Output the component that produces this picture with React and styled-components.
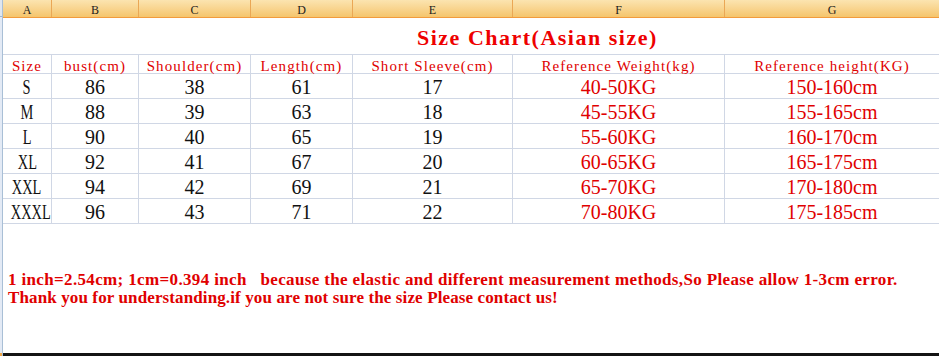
import React from "react";
import styled, { createGlobalStyle } from "styled-components";

const GlobalStyle = createGlobalStyle`
  html, body { margin: 0; padding: 0; background: #ffffff; }
  body { font-family: "Liberation Serif", serif; }
  * { box-sizing: border-box; }
`;

const COLS = "49px 87px 112px 102px 160px 212px 1fr";
const GRID = "#d0d7e5";
const RED = "#e00000";

const Page = styled.div`
  display: flex;
  width: 939px;
  height: 356px;
  overflow: hidden;
`;

const RowHeaderStrip = styled.div`
  width: 3px;
  flex: none;
  display: flex;
  flex-direction: column;
  background: #e3eaf5;
  border-right: 1px solid #a9bfd6;
`;

const StripCorner = styled.div`
  height: 17px;
  background: #dfe6ef;
  border-bottom: 1px solid #9eb6ce;
`;

const StripFill = styled.div`
  flex: 1;
`;

const StripFoot = styled.div`
  height: 3px;
  background: #f0a848;
`;

const Sheet = styled.div`
  flex: 1;
  display: flex;
  flex-direction: column;
  min-width: 0;
`;

const ColumnHeaderRow = styled.div`
  display: grid;
  grid-template-columns: ${COLS};
  grid-auto-rows: 17px;
  background: linear-gradient(#fbe4b0, #f8d38c 55%, #f5c56c);
  border-bottom: 1px solid #f29b3c;
`;

const ColumnHeaderCell = styled.div`
  border-right: ${(p) => (p.$last ? "none" : "1px solid #eaa755")};
  text-align: center;
  font-family: "Liberation Serif", serif;
  font-size: 12px;
  line-height: normal;
  padding-top: 3px;
  color: #1c1c1c;
`;

const TitleRow = styled.div`
  height: 37px;
  border-bottom: 1px solid ${GRID};
  padding: 7px 0 0 414px;
  font-family: "Liberation Serif", serif;
  font-weight: bold;
  font-size: 22px;
  letter-spacing: 1.5px;
  line-height: normal;
  color: #ee0000;
  white-space: nowrap;
`;

const TableRow = styled.div`
  display: grid;
  grid-template-columns: ${COLS};
  grid-auto-rows: ${(p) => (p.$label ? "19px" : "25px")};
`;

const Cell = styled.div`
  border-right: ${(p) => (p.$last ? "none" : `1px solid ${GRID}`)};
  border-bottom: 1px solid ${GRID};
  text-align: center;
  white-space: nowrap;
  overflow: visible;
  font-family: "Liberation Serif", serif;
  line-height: normal;
  color: ${(p) => (p.$red ? RED : "#111111")};
  font-size: ${(p) => (p.$label ? "15px" : "20px")};
  padding-top: ${(p) => (p.$label ? "3px" : "2px")};
  letter-spacing: ${(p) => (p.$label ? "1.1px" : "0px")};
`;

const SizeLabel = styled.span`
  display: inline-block;
  transform: scaleX(0.72);
  transform-origin: center;
`;

const Note = styled.div`
  flex: 1;
  padding: 47px 0 0 5px;
  font-family: "Liberation Serif", serif;
  font-weight: bold;
  font-size: 17px;
  line-height: 18px;
  color: ${RED};
`;

const NoteLine = styled.div`
  white-space: pre;
  letter-spacing: ${(p) => p.$spacing};
`;

const BottomBar = styled.div`
  height: 3px;
  background: #141414;
`;

const letters = ["A", "B", "C", "D", "E", "F", "G"];
const labels = [
  "Size",
  "bust(cm)",
  "Shoulder(cm)",
  "Length(cm)",
  "Short Sleeve(cm)",
  "Reference Weight(kg)",
  "Reference height(KG)",
];
const rows = [
  ["S", "86", "38", "61", "17", "40-50KG", "150-160cm"],
  ["M", "88", "39", "63", "18", "45-55KG", "155-165cm"],
  ["L", "90", "40", "65", "19", "55-60KG", "160-170cm"],
  ["XL", "92", "41", "67", "20", "60-65KG", "165-175cm"],
  ["XXL", "94", "42", "69", "21", "65-70KG", "170-180cm"],
  ["XXXL", "96", "43", "71", "22", "70-80KG", "175-185cm"],
];

export default function App() {
  return (
    <>
      <GlobalStyle />
      <Page>
        <RowHeaderStrip>
          <StripCorner />
          <StripFill />
          <StripFoot />
        </RowHeaderStrip>
        <Sheet>
          <ColumnHeaderRow>
            {letters.map((l, i) => (
              <ColumnHeaderCell key={l} $last={i === letters.length - 1}>
                {l}
              </ColumnHeaderCell>
            ))}
          </ColumnHeaderRow>
          <TitleRow>Size Chart(Asian size)</TitleRow>
          <TableRow $label>
            {labels.map((t, i) => (
              <Cell key={t} $label $red $last={i === labels.length - 1}>
                {t}
              </Cell>
            ))}
          </TableRow>
          {rows.map((r) => (
            <TableRow key={r[0]}>
              {r.map((v, i) => (
                <Cell key={i} $red={i >= 5} $last={i === r.length - 1}>
                  {i === 0 ? <SizeLabel>{v}</SizeLabel> : v}
                </Cell>
              ))}
            </TableRow>
          ))}
          <Note>
            <NoteLine $spacing="0.35px">
              {"1 inch=2.54cm; 1cm=0.394 inch   because the elastic and different measurement methods,So Please allow 1-3cm error."}
            </NoteLine>
            <NoteLine $spacing="0.12px">
              {"Thank you for understanding.if you are not sure the size Please contact us!"}
            </NoteLine>
          </Note>
          <BottomBar />
        </Sheet>
      </Page>
    </>
  );
}
